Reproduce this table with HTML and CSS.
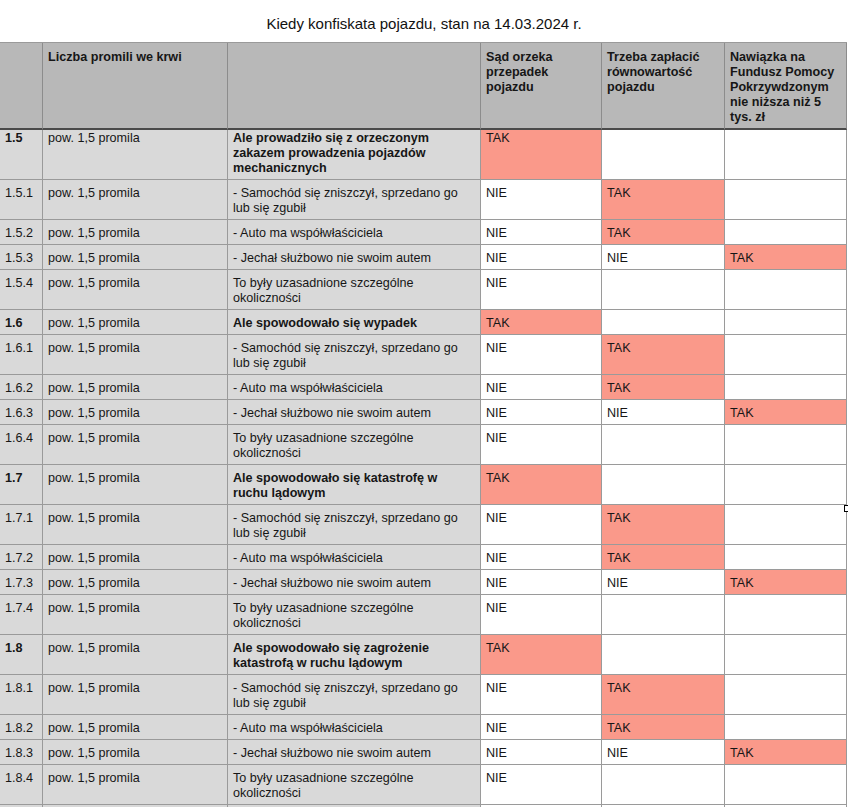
FILE: index.html
```html
<!DOCTYPE html>
<html lang="pl">
<head>
<meta charset="utf-8">
<title>Kiedy konfiskata pojazdu</title>
<link rel="stylesheet" href="styles.css">
</head>
<body>
<div class="page">
  <h1 class="title">Kiedy konfiskata pojazdu, stan na 14.03.2024 r.</h1>
  <div class="sheet">
    <div class="c h"></div>
    <div class="c h">Liczba promili we krwi</div>
    <div class="c h"></div>
    <div class="c h">Sąd orzeka<br>przepadek<br>pojazdu</div>
    <div class="c h">Trzeba zapłacić<br>równowartość<br>pojazdu</div>
    <div class="c h">Nawiązka na<br>Fundusz Pomocy<br>Pokrzywdzonym<br>nie niższa niż 5<br>tys. zł</div>

    <div class="c g b first">1.5</div>
    <div class="c g first">pow. 1,5 promila</div>
    <div class="c g b first">Ale prowadziło się z orzeczonym<br>zakazem prowadzenia pojazdów<br>mechanicznych</div>
    <div class="c s first">TAK</div>
    <div class="c first"></div>
    <div class="c first"></div>

    <div class="c g">1.5.1</div><div class="c g">pow. 1,5 promila</div><div class="c g">- Samochód się zniszczył, sprzedano go<br>lub się zgubił</div><div class="c">NIE</div><div class="c s">TAK</div><div class="c"></div>
    <div class="c g">1.5.2</div><div class="c g">pow. 1,5 promila</div><div class="c g">- Auto ma współwłaściciela</div><div class="c">NIE</div><div class="c s">TAK</div><div class="c"></div>
    <div class="c g">1.5.3</div><div class="c g">pow. 1,5 promila</div><div class="c g">- Jechał służbowo nie swoim autem</div><div class="c">NIE</div><div class="c">NIE</div><div class="c s">TAK</div>
    <div class="c g">1.5.4</div><div class="c g">pow. 1,5 promila</div><div class="c g">To były uzasadnione szczególne<br>okoliczności</div><div class="c">NIE</div><div class="c"></div><div class="c"></div>

    <div class="c g b">1.6</div><div class="c g">pow. 1,5 promila</div><div class="c g b">Ale spowodowało się wypadek</div><div class="c s">TAK</div><div class="c"></div><div class="c"></div>
    <div class="c g">1.6.1</div><div class="c g">pow. 1,5 promila</div><div class="c g">- Samochód się zniszczył, sprzedano go<br>lub się zgubił</div><div class="c">NIE</div><div class="c s">TAK</div><div class="c"></div>
    <div class="c g">1.6.2</div><div class="c g">pow. 1,5 promila</div><div class="c g">- Auto ma współwłaściciela</div><div class="c">NIE</div><div class="c s">TAK</div><div class="c"></div>
    <div class="c g">1.6.3</div><div class="c g">pow. 1,5 promila</div><div class="c g">- Jechał służbowo nie swoim autem</div><div class="c">NIE</div><div class="c">NIE</div><div class="c s">TAK</div>
    <div class="c g">1.6.4</div><div class="c g">pow. 1,5 promila</div><div class="c g">To były uzasadnione szczególne<br>okoliczności</div><div class="c">NIE</div><div class="c"></div><div class="c"></div>

    <div class="c g b">1.7</div><div class="c g">pow. 1,5 promila</div><div class="c g b">Ale spowodowało się katastrofę w<br>ruchu lądowym</div><div class="c s">TAK</div><div class="c"></div><div class="c"></div>
    <div class="c g">1.7.1</div><div class="c g">pow. 1,5 promila</div><div class="c g">- Samochód się zniszczył, sprzedano go<br>lub się zgubił</div><div class="c">NIE</div><div class="c s">TAK</div><div class="c"></div>
    <div class="c g">1.7.2</div><div class="c g">pow. 1,5 promila</div><div class="c g">- Auto ma współwłaściciela</div><div class="c">NIE</div><div class="c s">TAK</div><div class="c"></div>
    <div class="c g">1.7.3</div><div class="c g">pow. 1,5 promila</div><div class="c g">- Jechał służbowo nie swoim autem</div><div class="c">NIE</div><div class="c">NIE</div><div class="c s">TAK</div>
    <div class="c g">1.7.4</div><div class="c g">pow. 1,5 promila</div><div class="c g">To były uzasadnione szczególne<br>okoliczności</div><div class="c">NIE</div><div class="c"></div><div class="c"></div>

    <div class="c g b">1.8</div><div class="c g">pow. 1,5 promila</div><div class="c g b">Ale spowodowało się zagrożenie<br>katastrofą w ruchu lądowym</div><div class="c s">TAK</div><div class="c"></div><div class="c"></div>
    <div class="c g">1.8.1</div><div class="c g">pow. 1,5 promila</div><div class="c g">- Samochód się zniszczył, sprzedano go<br>lub się zgubił</div><div class="c">NIE</div><div class="c s">TAK</div><div class="c"></div>
    <div class="c g">1.8.2</div><div class="c g">pow. 1,5 promila</div><div class="c g">- Auto ma współwłaściciela</div><div class="c">NIE</div><div class="c s">TAK</div><div class="c"></div>
    <div class="c g">1.8.3</div><div class="c g">pow. 1,5 promila</div><div class="c g">- Jechał służbowo nie swoim autem</div><div class="c">NIE</div><div class="c">NIE</div><div class="c s">TAK</div>
    <div class="c g">1.8.4</div><div class="c g">pow. 1,5 promila</div><div class="c g">To były uzasadnione szczególne<br>okoliczności</div><div class="c">NIE</div><div class="c"></div><div class="c"></div>

    <div class="c g">&nbsp;</div><div class="c g"></div><div class="c g"></div><div class="c"></div><div class="c"></div><div class="c"></div>
  </div>
  <span class="handle"></span>
</div>
</body>
</html>
```
FILE: styles.css
```css
* { box-sizing: border-box; }
html, body { margin: 0; padding: 0; background: #ffffff; }
body {
  font-family: "Liberation Sans", Arial, Helvetica, sans-serif;
  color: #161616;
  overflow: hidden;
}
.page { position: relative; width: 848px; }
.title {
  margin: 0;
  height: 42px;
  padding-top: 15px;
  font-size: 15px;
  font-weight: normal;
  line-height: 18px;
  text-align: center;
  color: #111;
}
.sheet {
  display: grid;
  grid-template-columns: 43px 185px 253px 121px 123px 122px;
  width: 847px;
  border-top: 1px solid #9a9a9a;
  font-size: 12.6px;
  line-height: 15px;
}
.c {
  padding: 6px 4px 3px 5px;
  border-right: 1px solid #9a9a9a;
  border-bottom: 1px solid #9a9a9a;
  background: #ffffff;
  min-height: 25px;
}
.h {
  background: #b8b8b8;
  font-weight: bold;
  padding-top: 7px;
  border-bottom: 2px solid #4a4a4a;
  border-right-color: #8c8c8c;
}
.g { background: #d9d9d9; }
.s { background: #fa998a; }
.b { font-weight: bold; }
.first { padding-top: 1px; }
.handle {
  position: absolute;
  left: 844px;
  top: 505px;
  width: 7px;
  height: 7px;
  border: 1px solid #000;
  background: #fff;
}
```
